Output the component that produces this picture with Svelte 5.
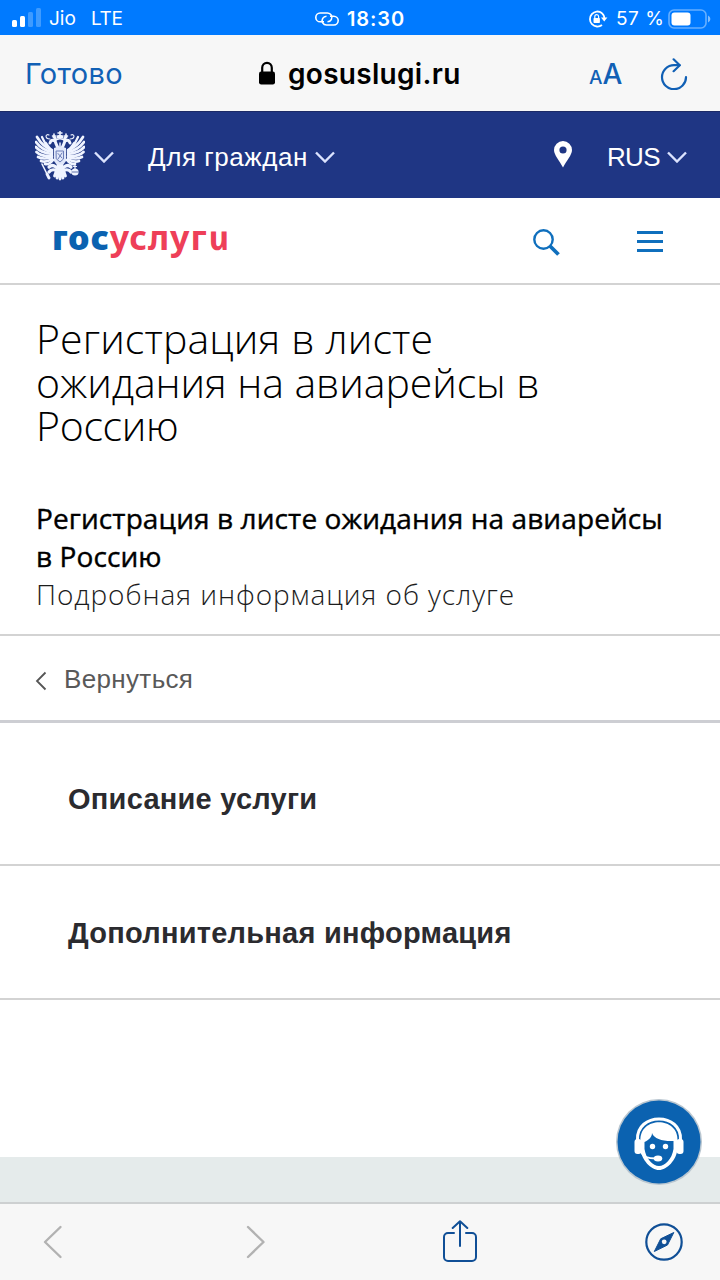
<script lang="ts">
	interface Section {
		id: string;
		title: string;
	}

	const sections: Section[] = [
		{ id: 'description', title: 'Описание услуги' },
		{ id: 'extra', title: 'Дополнительная информация' },
	];

	// Signal bars, left to right
	const bars = [
		{ height: 7, active: true },
		{ height: 11, active: true },
		{ height: 15, active: false },
		{ height: 19, active: false },
	];

	// Left wing of the emblem, the right one is mirrored
	const feathers = [
		'M17 19 Q8 16 2 6',
		'M17 21 Q7 19 1 11',
		'M17 23 Q6 22 .8 16',
		'M17 25 Q7 26 1.5 21',
		'M17 26 Q9 29 3 26',
		'M17 28 Q11 32 6 30',
		'M18 29 Q14 34 10 33',
	];
</script>

{#snippet chevron()}
	<svg class="chevron" viewBox="0 0 20 12" width="20" height="12">
		<path d="M1 1.5 10 10.5 19 1.5" fill="none" stroke="currentColor" stroke-width="2.4" />
	</svg>
{/snippet}

{#snippet wing()}
	{#each feathers as d}
		<path {d} stroke-width="2.7" />
	{/each}
	<path d="M14 18 Q10 13 7 6M17 20 Q13 15 11 12" stroke-width="2.2" />
	<path d="M21 36 Q17 33 14 36M20 39 Q16 38 14 41" stroke-width="3.2" />
	<path d="M23 17 Q21 13 20 10 Q16 8 15 12 M20 10 Q21 7 19 6" stroke-width="3" />
	<path d="M15 8 Q11 8 11 5 Q12 3 14 4" stroke-width="1.1" />
	<path d="M19 5 V3 M17.5 5 H20.5" stroke-width="1.6" />
{/snippet}

<div class="screen">
	<header class="status">
		<div class="signal">
			{#each bars as bar}
				<i class:active={bar.active} style="height: {bar.height}px"></i>
			{/each}
		</div>
		<span class="carrier">Jio</span>
		<span class="network">LTE</span>
		<svg class="link" viewBox="0 0 24 14" width="24" height="14" fill="none" stroke="#fff" stroke-width="1.6">
			<path d="M9 9.8H5.2A4.4 4.4 0 0 1 5.2 1h7.3a4.4 4.4 0 0 1 3.8 6.6c-.9 1.5-2.3 2.2-3.8 2.2" />
			<path d="M15 4.2h3.8a4.4 4.4 0 0 1 0 8.8h-7.3a4.4 4.4 0 0 1-3.8-6.6c.9-1.5 2.3-2.2 3.8-2.2" />
		</svg>
		<span class="time">18:30</span>
		<svg class="rotation" viewBox="0 0 20 18" width="20" height="18">
			<path d="M13.8 2.9A7.5 7.5 0 1 0 14 15M12.5 2.200a7.500 7.500 0 0 1 3.900 6" fill="none" stroke="#fff" stroke-width="1.8" />
			<path d="M13 7.6h6.4l-3.200 4z" fill="#fff" />
			<rect x="5.500" y="8" width="6.400" height="5" rx=".7" fill="#fff" />
			<path d="M6.800 8V6.600a1.900 1.900 0 0 1 3.800 0V8" fill="none" stroke="#fff" stroke-width="1.2" />
		</svg>
		<span class="percent">57 %</span>
		<svg class="battery" viewBox="0 0 43 20" width="43" height="20">
			<rect x="1" y="1" width="37" height="18" rx="5" fill="none" stroke="#fff" stroke-opacity=".4" stroke-width="1.6" />
			<rect x="3.5" y="3.5" width="19" height="13" rx="3" fill="#fff" />
			<path d="M40 6.5q2.4 1 2.4 3.5T40 13.5z" fill="#fff" fill-opacity=".5" />
		</svg>
	</header>

	<div class="address">
		<span class="done">Готово</span>
		<svg class="lock" viewBox="0 0 18 24" width="18" height="24">
			<rect x="1" y="10.5" width="16" height="13" rx="2.2" />
			<path d="M4.2 11V6.8a4.8 5 0 0 1 9.6 0V11" fill="none" stroke="#000" stroke-width="2.2" />
		</svg>
		<span class="host">gosuslugi.ru</span>
		<span class="reader"><small>A</small>A</span>
		<svg class="reload" viewBox="0 0 28 32" width="28" height="32" fill="none" stroke="#1160b5" stroke-width="2.2" stroke-linecap="round" stroke-linejoin="round">
			<path d="M19.5 7.2H14A12 12 0 1 0 26 19" />
			<path d="M13.6 1.3 19.8 7.2 13.6 13.2" />
		</svg>
	</div>

	<nav class="topbar">
		<svg class="emblem" viewBox="0 0 50 50" width="50" height="50" fill="none" stroke="#f0f4ff" stroke-linecap="round">
			<g>{@render wing()}</g>
			<g transform="matrix(-1 0 0 1 50 0)">{@render wing()}</g>
			<path d="M25 0V4M23 2H27" stroke-width="1.5" />
			<path d="M22 7.4 21.4 4.6 25 3.8 28.6 4.6 28 7.4z" fill="#f0f4ff" stroke="none" />
			<path d="M20 9.5Q25 6 30 9.5M25 12V17" stroke-width="1.5" />
			<path d="M19 17 Q25 14 31 17V30Q29 34 25 36 21 34 19 30z" fill="#e2e8fa" stroke="none" />
			<path d="M21.5 20H28.5V28L25 31 21.5 28z" stroke="#6b7db8" stroke-width="1" />
			<path d="M23 22.5 27 27M27 22 23 28" stroke="#6b7db8" stroke-width="1" />
			<path d="M25 35V48M23 35 19.500 45M27 35 30.500 45M24 35 22 47M26 35 28 47" stroke-width="2.8" />
			<path d="M7 33 14 47" stroke-width="1.6" />
			<path d="M12 43 14 47" stroke-width="2.8" />
			<circle cx="40" cy="41" r="3.6" fill="#f0f4ff" stroke="none" />
			<path d="M40 38V34M38.5 35.5H41.5" stroke-width="1.2" />
			<path d="M37 41H43" stroke="#1f3684" stroke-width=".7" />
		</svg>
		{@render chevron()}
		<span class="audience">Для граждан</span>
		{@render chevron()}
		<svg class="pin" viewBox="0 0 18 27" width="18" height="27">
			<path fill="#fff" fill-rule="evenodd" d="M9 0a9 9 0 0 1 9 9c0 5-5.4 10.5-9 17.5C5.4 19.5 0 14 0 9a9 9 0 0 1 9-9zm0 5.4a3.6 3.6 0 1 0 0 7.2 3.6 3.6 0 0 0 0-7.2z" />
		</svg>
		<span class="lang">RUS</span>
		{@render chevron()}
	</nav>

	<div class="brand">
		<span class="logo"><b>гос</b>услуг<em>и</em></span>
		<svg class="search" viewBox="0 0 27 27" width="27" height="27" fill="none" stroke="#0f6fbd">
			<circle cx="10.5" cy="10.5" r="9.2" stroke-width="2.4" />
			<path d="M17 17 25.5 25.5" stroke-width="3.8" />
		</svg>
		<div class="burger"><i></i><i></i><i></i></div>
	</div>

	<section class="intro">
		<h1>
			<span class="l1">Регистрация в листе</span>
			<span class="l2">ожидания на авиарейсы в</span>
			<span class="l3">Россию</span>
		</h1>
		<h2>
			<span>Регистрация в листе ожидания на авиарейсы</span>
			<span>в Россию</span>
		</h2>
		<p>Подробная информация об услуге</p>
	</section>

	<div class="back">
		<svg viewBox="0 0 12 20" width="12" height="20">
			<path d="M10.5 1.5 2 10l8.5 8.5" fill="none" stroke="#555" stroke-width="1.8" />
		</svg>
		<span>Вернуться</span>
	</div>

	<main>
		{#each sections as section (section.id)}
			<div class="row {section.id}"><span>{section.title}</span></div>
		{/each}
	</main>

	<footer></footer>

	<div class="toolbar">
		<svg class="prev" viewBox="0 0 20 34" width="20" height="34">
			<path d="M17.5 2 2 17 17.5 32" />
		</svg>
		<svg class="next" viewBox="0 0 20 34" width="20" height="34">
			<path d="M2 2 17.5 17 2 32" />
		</svg>
		<svg class="share" viewBox="0 0 34 42" width="34" height="42" fill="none" stroke="#104f96" stroke-width="2" stroke-linecap="round" stroke-linejoin="round">
			<path d="M11 13H5a4 4 0 0 0-4 4v20a4 4 0 0 0 4 4h24a4 4 0 0 0 4-4V17a4 4 0 0 0-4-4h-6" />
			<path d="M17 26V1.5M9.7 8 17 1.2 24.3 8" />
		</svg>
		<svg class="compass" viewBox="0 0 38 38" width="38" height="38">
			<circle cx="19" cy="19" r="17.7" fill="none" stroke="#104f96" stroke-width="2.2" />
			<path d="M28.8 9.5 22.5 22 9.3 28.5 15.7 15.8z" fill="#104f96" stroke="#104f96" stroke-linejoin="round" />
			<circle cx="19.2" cy="18.8" r="2.4" fill="#f7f7f7" />
		</svg>
	</div>

	<svg class="support" viewBox="0 0 88 88" width="88" height="88">
		<circle cx="44" cy="44" r="43" fill="#b9c6d0" />
		<circle cx="44" cy="44" r="41.5" fill="#0b62b0" />
		<path d="M22.5 42C21 14 67 14 65.5 42" fill="none" stroke="#fff" stroke-width="3" />
		<rect x="19.5" y="41" width="7" height="15" rx="3" fill="#fff" />
		<rect x="61.5" y="41" width="7" height="15" rx="3" fill="#fff" />
		<path d="M25.5 43C24 18 64 18 62.500 43V51C61.500 62 52 72 44 72S26.500 62 25.500 51z" fill="#fff" />
		<path d="M37 35C39 41 48 43.5 58.5 43V51C57 61 50 68 44 68S31 61 29.5 51V44C34 42 37 39 37 35z" fill="#0b62b0" />
		<circle cx="37.5" cy="48.500" r="2.700" fill="#fff" />
		<circle cx="50.5" cy="48.500" r="2.700" fill="#fff" />
		<path d="M26 54C28 59 33 60.5 41 60.500" fill="none" stroke="#fff" stroke-width="2" />
		<ellipse cx="43" cy="60.500" rx="4.300" ry="3" fill="#fff" />
	</svg>
</div>

<style>
	:global(body) {
		background: #fff;
	}

	.screen {
		position: relative;
		display: flex;
		flex-direction: column;
		width: 720px;
		height: 1280px;
		overflow: hidden;
		background: #fff;
		font-family: 'Liberation Sans', sans-serif;
		color: #000;
	}

	.screen > * {
		box-sizing: border-box;
		flex-shrink: 0;
	}

	svg {
		display: block;
		flex-shrink: 0;
	}

	span {
		white-space: nowrap;
	}

	.status,
	.address,
	.topbar,
	.brand,
	.back,
	.row,
	.toolbar {
		display: flex;
		align-items: center;
	}

	.status {
		height: 35px;
		padding-top: 2px;
		background: #007aff;
		color: #fff;
		font: 19px Inter, sans-serif;
	}

	.signal {
		display: flex;
		align-items: flex-end;
		gap: 3px;
		height: 19px;
		margin: -2px 0 0 12px;
	}

	.signal i {
		width: 5px;
		border-radius: 1.5px;
		background: #3f9bff;
	}

	.signal .active {
		background: #fff;
	}

	.carrier {
		width: 42px;
		margin-left: 8px;
	}

	.network {
		width: 36px;
		letter-spacing: -0.4px;
	}

	.link {
		margin-left: 188px;
	}

	.time {
		width: 60px;
		margin-left: 8px;
		font-weight: 600;
		font-size: 20px;
		letter-spacing: 0.9px;
	}

	.rotation {
		margin-left: 181px;
	}

	.percent {
		width: 51px;
		margin-left: 8px;
		letter-spacing: 0.5px;
	}

	.battery {
		margin-left: 1px;
	}

	.address {
		height: 76px;
		padding-top: 1px;
		background: #f7f7f7;
		font-family: Inter, sans-serif;
		color: #1160b5;
	}

	.done {
		width: 100px;
		margin-left: 25px;
		font-size: 29px;
		letter-spacing: 0.3px;
	}

	.lock {
		margin: -2px 0 0 133px;
	}

	.host {
		width: 176px;
		margin-left: 12px;
		color: #000;
		font-weight: 600;
		font-size: 28px;
		letter-spacing: 0.3px;
	}

	.reader {
		width: 34px;
		margin-left: 125px;
		font-weight: 500;
		font-size: 28px;
	}

	.reader small {
		font-size: 19px;
	}

	.reload {
		margin: 0 0 0 37px;
	}

	.topbar {
		height: 87px;
		padding-top: 4px;
		border-top: 1px solid #1c2a66;
		background: #1f3684;
		color: #fff;
		font-size: 26px;
	}

	.topbar .chevron {
		color: #dbe3ff;
	}

	.emblem {
		margin: -3px 9px 0 35px;
	}

	.audience {
		width: 160px;
		margin: 0 7px 0 34px;
		letter-spacing: 0.55px;
	}

	.pin {
		margin: -6px 0 0 219px;
	}

	.lang {
		width: 54px;
		margin: 0 6px 0 35px;
		letter-spacing: -0.7px;
	}

	.brand {
		height: 87px;
		border-bottom: 2px solid #d3d3d3;
	}

	.logo {
		width: 178px;
		margin: -8px 0 0 52px;
		color: #ee3f58;
		font: bold 34px 'Noto Sans', sans-serif;
		letter-spacing: 0.95px;
	}

	.logo b {
		color: #0b62b0;
	}

	/* cursive letterform, set upright */
	.logo em {
		display: inline-block;
		transform: skewX(12deg);
	}

	.search {
		margin: 3px 0 0 303px;
	}

	.burger {
		display: flex;
		flex-direction: column;
		gap: 6px;
		margin: 2px 0 0 77px;
	}

	.burger i {
		width: 26px;
		height: 3px;
		background: #0f6fbd;
	}

	.intro {
		height: 351px;
		padding: 32px 36px 0;
		border-bottom: 2px solid #d3d3d3;
		font-family: 'Open Sans', sans-serif;
	}

	.intro span {
		display: block;
	}

	h1 {
		margin: 0;
		font-weight: 300;
		font-size: 41px;
		line-height: 43.5px;
	}

	.l1 {
		letter-spacing: 0.12px;
	}

	.l2 {
		letter-spacing: -0.08px;
	}

	.l3 {
		letter-spacing: -0.3px;
	}

	h2 {
		margin: 51px 0 0;
		font-weight: 500;
		font-size: 28px;
		line-height: 38px;
		letter-spacing: 0.1px;
		-webkit-text-stroke: 0.4px #000;
	}

	p {
		margin: 0;
		color: #1c1c1c;
		font-weight: 300;
		font-size: 28px;
		line-height: 38px;
		letter-spacing: 0.93px;
	}

	.back {
		height: 87px;
		border-bottom: 3px solid #cdced3;
		color: #595959;
		font-size: 26px;
		letter-spacing: 0.35px;
	}

	.back svg {
		margin: 6px 17px 0 35px;
	}

	.back span {
		margin-top: 3px;
	}

	.row {
		box-sizing: border-box;
		height: 134px;
		padding: 2px 68px 0;
		border-bottom: 2px solid #d3d3d3;
		color: #2b2b2f;
		font-weight: bold;
		font-size: 29px;
		letter-spacing: 0.25px;
	}

	.description {
		height: 143px;
		padding-top: 11px;
	}

	footer {
		height: 47px;
		margin-top: 157px;
		border-bottom: 2px solid #cdd0d1;
		background: #e5ebeb;
	}

	.toolbar {
		height: 76px;
		padding-bottom: 1px;
		background: #f7f7f7;
	}

	.prev,
	.next {
		fill: none;
		stroke: #b2b2b2;
		stroke-width: 2.4;
		stroke-linecap: round;
		stroke-linejoin: round;
	}

	.prev {
		margin-left: 43px;
	}

	.next {
		margin-left: 183px;
	}

	.share {
		margin: -2px 0 0 177px;
	}

	.compass {
		margin-left: 168px;
	}

	/* floats over the page and the footer */
	.support {
		position: absolute;
		top: 1098px;
		left: 615px;
	}
</style>
